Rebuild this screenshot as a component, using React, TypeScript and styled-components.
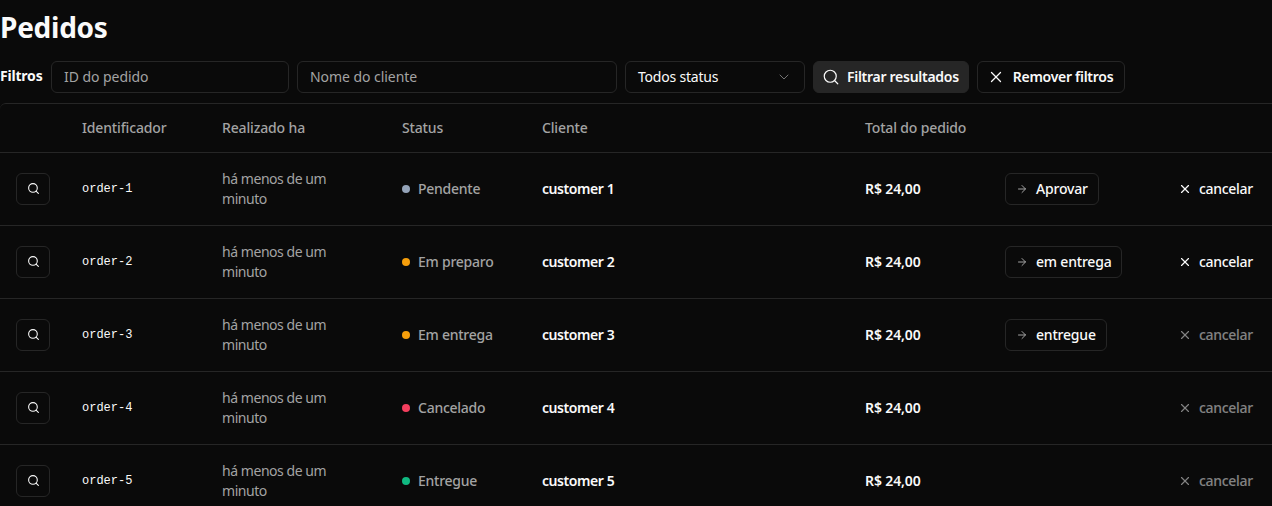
import React from "react";
import styled, { createGlobalStyle } from "styled-components";
import { Search, X, ArrowRight, ChevronDown } from "lucide-react";

const Global = createGlobalStyle`
  html, body { margin: 0; padding: 0; background: #0a0a0a; overflow: hidden; height: 506px; }
  body { font-family: "Noto Sans", "DejaVu Sans", sans-serif; color: #fafafa; font-size: 14px; }
  * { box-sizing: border-box; }
`;

const Page = styled.main`
  width: 1272px;
  display: flex;
  flex-direction: column;
  gap: 10px;
`;

const Title = styled.h1`
  margin: 0;
  height: 51px;
  padding-top: 9px;
  font-size: 28px;
  line-height: 36px;
  font-weight: 700;
  letter-spacing: -0.25px;
`;

const FilterBar = styled.form`
  display: flex;
  align-items: center;
  gap: 8px;
  height: 32px;
`;

const FilterLabel = styled.span`
  font-size: 14px;
  line-height: 30px;
  height: 32px;
  font-weight: 700;
  width: 43px;
  letter-spacing: -0.2px;
`;

const Input = styled.div<{ $w: number }>`
  width: ${(p) => p.$w}px;
  height: 32px;
  border: 1px solid #262626;
  border-radius: 6px;
  padding: 0 12px 2px;
  display: flex;
  align-items: center;
  color: #a3a3a3;
  letter-spacing: -0.05px;
`;

const Select = styled.div`
  width: 180px;
  height: 32px;
  border: 1px solid #262626;
  border-radius: 6px;
  padding: 0 12px;
  display: flex;
  align-items: center;
  justify-content: space-between;
  letter-spacing: -0.2px;
  span { padding-bottom: 2px; }
  svg { color: #737373; }
`;

const Button = styled.button<{ $solid?: boolean }>`
  height: 32px;
  padding: 0 ${(p) => (p.$solid ? "9px" : "11px")} 0 ${(p) => (p.$solid ? "8px" : "9px")};
  border-radius: 6px;
  border: 1px solid #262626;
  background: ${(p) => (p.$solid ? "#262626" : "transparent")};
  color: #fafafa;
  display: inline-flex;
  align-items: center;
  gap: ${(p) => (p.$solid ? "7px" : "8px")};
  font: 600 14px "Noto Sans", sans-serif;
  letter-spacing: -0.28px;
  white-space: nowrap;
  span { padding-bottom: 2px; }
`;

const TableBox = styled.div`
  border: 1px solid #262626;
  border-left: 0;
  border-right: 0;
  border-radius: 6px 0 0 0;
  width: 1272px;
`;

const Table = styled.table`
  width: 1272px;
  table-layout: fixed;
  border-collapse: collapse;
`;

const Head = styled.th<{ $w?: number }>`
  width: ${(p) => (p.$w ? `${p.$w}px` : "auto")};
  height: 48px;
  padding: 0 0 0 16px;
  text-align: left;
  color: #a3a3a3;
  font-weight: 500;
  letter-spacing: -0.15px;
  border-bottom: 1px solid #262626;
`;

const Row = styled.tr`
  height: 73px;
  border-bottom: 1px solid #262626;
`;

const Cell = styled.td`
  padding: 0 0 0 16px;
`;

const IconButton = styled.button`
  width: 34px;
  height: 32px;
  padding: 0;
  border: 1px solid #262626;
  border-radius: 6px;
  background: transparent;
  color: #fafafa;
  display: flex;
  align-items: center;
  justify-content: center;
`;

const OrderId = styled.code`
  display: block;
  font-family: "Liberation Mono", monospace;
  font-size: 12px;
  font-weight: 400;
`;

const Muted = styled.span`
  color: #a3a3a3;
  line-height: 20px;
  display: block;
  width: 110px;
  letter-spacing: -0.45px;
`;

const StatusWrap = styled.span`
  display: flex;
  align-items: center;
  gap: 8px;
  color: #a3a3a3;
  font-weight: 500;
  letter-spacing: -0.25px;
`;

const Dot = styled.span<{ $c: string }>`
  width: 8px;
  height: 8px;
  border-radius: 50%;
  background: ${(p) => p.$c};
`;

const Customer = styled.span`
  font-weight: 600;
  letter-spacing: -0.42px;
  white-space: nowrap;
`;

const Money = styled.span`
  font-weight: 600;
  letter-spacing: -0.12px;
  white-space: nowrap;
`;

const ActionButton = styled.button`
  height: 32px;
  padding: 0 10px;
  border: 1px solid #262626;
  border-radius: 6px;
  background: transparent;
  color: #fafafa;
  display: inline-flex;
  align-items: center;
  gap: 8px;
  font: 500 14px "Noto Sans", sans-serif;
  letter-spacing: -0.2px;
  white-space: nowrap;
  svg { color: #a3a3a3; }
`;

const CancelButton = styled.button<{ $off?: boolean }>`
  height: 32px;
  padding: 0;
  margin-left: -1px;
  border: 0;
  background: transparent;
  color: #fafafa;
  opacity: ${(p) => (p.$off ? 0.5 : 1)};
  display: inline-flex;
  align-items: center;
  gap: 7px;
  font: 500 14px "Noto Sans", sans-serif;
  letter-spacing: -0.3px;
`;

const orders = [
  { n: 1, status: "Pendente", c: "#94a3b8", action: "Aprovar", cancel: true },
  { n: 2, status: "Em preparo", c: "#f59e0b", action: "em entrega", cancel: true },
  { n: 3, status: "Em entrega", c: "#f59e0b", action: "entregue", cancel: false },
  { n: 4, status: "Cancelado", c: "#f43f5e", action: "", cancel: false },
  { n: 5, status: "Entregue", c: "#10b981", action: "", cancel: false },
];

export default function App() {
  return (
    <Page>
      <Global />
      <Title>Pedidos</Title>
      <FilterBar>
        <FilterLabel>Filtros</FilterLabel>
        <Input $w={238}>ID do pedido</Input>
        <Input $w={320}>Nome do cliente</Input>
        <Select>
          <span>Todos status</span>
          <ChevronDown size={16} strokeWidth={1.5} />
        </Select>
        <Button type="button" $solid>
          <Search size={18} strokeWidth={1.6} />
          <span>Filtrar resultados</span>
        </Button>
        <Button type="button">
          <X size={18} strokeWidth={1.75} />
          <span>Remover filtros</span>
        </Button>
      </FilterBar>
      <TableBox>
        <Table>
          <thead>
            <tr>
              <Head $w={66} />
              <Head $w={140}>Identificador</Head>
              <Head $w={180}>Realizado ha</Head>
              <Head $w={140}>Status</Head>
              <Head $w={323}>Cliente</Head>
              <Head $w={140}>Total do pedido</Head>
              <Head $w={174} />
              <Head />
            </tr>
          </thead>
          <tbody>
            {orders.map((o) => (
              <Row key={o.n}>
                <Cell>
                  <IconButton type="button" aria-label="Detalhes">
                    <Search size={13} strokeWidth={2} />
                  </IconButton>
                </Cell>
                <Cell>
                  <OrderId>order-{o.n}</OrderId>
                </Cell>
                <Cell>
                  <Muted>há menos de um minuto</Muted>
                </Cell>
                <Cell>
                  <StatusWrap>
                    <Dot $c={o.c} />
                    {o.status}
                  </StatusWrap>
                </Cell>
                <Cell>
                  <Customer>customer {o.n}</Customer>
                </Cell>
                <Cell>
                  <Money>R$ 24,00</Money>
                </Cell>
                <Cell>
                  {o.action && (
                    <ActionButton type="button">
                      <ArrowRight size={12} strokeWidth={2} />
                      {o.action}
                    </ActionButton>
                  )}
                </Cell>
                <Cell>
                  <CancelButton type="button" $off={!o.cancel}>
                    <X size={14} strokeWidth={2} />
                    cancelar
                  </CancelButton>
                </Cell>
              </Row>
            ))}
          </tbody>
        </Table>
      </TableBox>
    </Page>
  );
}
